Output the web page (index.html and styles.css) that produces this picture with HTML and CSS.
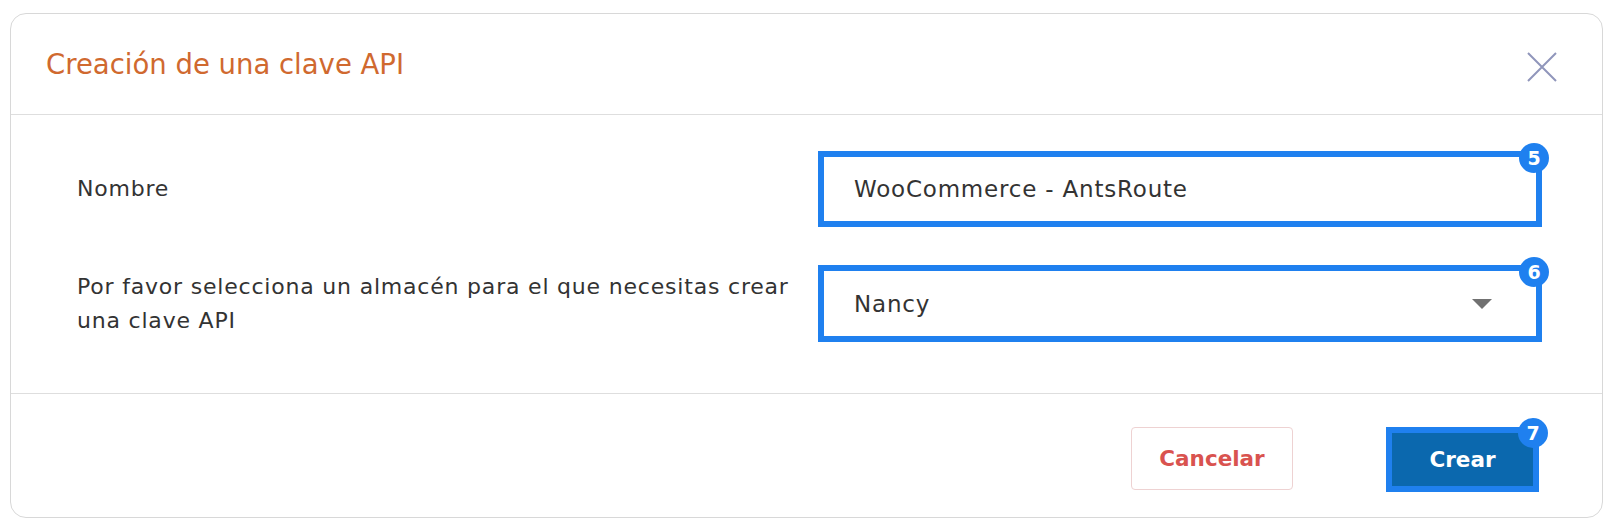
FILE: index.html
```html
<!DOCTYPE html>
<html lang="es">
<head>
    <meta charset="UTF-8">
    <meta name="viewport" content="width=device-width, initial-scale=1.0">
    <title>Creación de una clave API</title>
    <link rel="stylesheet" href="styles.css">
</head>
<body>
    <!-- API key modal -->
    <div class="modal">
        <div class="modal-header">
            <h2 class="modal-title">Creación de una clave API</h2>
            <button class="close-btn" aria-label="Cerrar">
                <svg width="30" height="30" viewBox="0 0 30 30">
                    <path d="M1 1 L29 29 M29 1 L1 29" stroke="#9096bb" stroke-width="2" fill="none"/>
                </svg>
            </button>
        </div>

        <div class="modal-body">
            <div class="form-row">
                <label class="form-label" for="api-name">Nombre</label>
                <div class="field highlight">
                    <input type="text" id="api-name" value="WooCommerce - AntsRoute">
                    <span class="step-badge">5</span>
                </div>
            </div>

            <div class="form-row">
                <label class="form-label">Por favor selecciona un almacén para el que necesitas crear<br>una clave API</label>
                <div class="field highlight select">
                    <span class="field-value">Nancy</span>
                    <svg class="select-arrow" width="20" height="10" viewBox="0 0 20 10">
                        <path d="M0 0 L20 0 L10 10 Z" fill="#717171"/>
                    </svg>
                    <span class="step-badge">6</span>
                </div>
            </div>
        </div>

        <div class="modal-footer">
            <button class="btn btn-cancel">Cancelar</button>
            <button class="btn btn-create">Crear<span class="step-badge">7</span></button>
        </div>
    </div>
</body>
</html>
```

FILE: styles.css
```css
body {
    margin: 0;
    padding: 0;
    background: #fff;
    font-family: 'DejaVu Sans', sans-serif;
    color: #333;
}

.modal {
    margin: 13px 11px 0 10px;
    height: 505px;
    box-sizing: border-box;
    border: 1px solid #d8d8d8;
    border-radius: 16px;
    display: flex;
    flex-direction: column;
}

.modal-header {
    height: 101px;
    box-sizing: border-box;
    border-bottom: 1px solid #dedede;
    display: flex;
    align-items: center;
    justify-content: space-between;
    padding: 0 45px 0 35px;
}

.modal-title {
    margin: 0;
    font-size: 27.5px;
    font-weight: normal;
    color: #d0692f;
}

.close-btn {
    background: none;
    border: none;
    padding: 0;
    margin-top: 6px;
    width: 30px;
    height: 30px;
    cursor: pointer;
}

.close-btn svg {
    display: block;
}

.modal-body {
    padding: 36px 60px 51px 66px;
    border-bottom: 1px solid #dedede;
    display: flex;
    flex-direction: column;
    gap: 38px;
}

.form-row {
    display: grid;
    grid-template-columns: 1fr 724px;
    align-items: center;
}

.form-label {
    font-size: 22px;
    letter-spacing: 0.8px;
    line-height: 34px;
    color: #333;
}

.field {
    position: relative;
    height: 76px;
    box-sizing: border-box;
    display: flex;
    align-items: center;
    padding: 0 30px;
    background: #fff;
}

.field.select {
    height: 77px;
}

.highlight {
    border: 6px solid #1f80ef;
}

.field input {
    border: none;
    outline: none;
    padding: 0;
    width: 100%;
    font-family: inherit;
    font-size: 23px;
    letter-spacing: 0.8px;
    color: #333;
    background: transparent;
}

.field-value {
    flex: 1;
    font-size: 23px;
    letter-spacing: 0.8px;
    color: #333;
}

.select-arrow {
    margin-right: 14px;
}

.step-badge {
    position: absolute;
    top: -14px;
    right: -13px;
    width: 30px;
    height: 30px;
    border-radius: 50%;
    background: #1f80ef;
    color: #fff;
    font-size: 19px;
    font-weight: bold;
    letter-spacing: 0;
    display: flex;
    align-items: center;
    justify-content: center;
}

.modal-footer {
    flex: 1;
    display: flex;
    justify-content: flex-end;
    align-items: flex-start;
    gap: 93px;
    padding: 33px 63px 0 0;
}

.btn {
    font-family: inherit;
    font-size: 21.5px;
    font-weight: bold;
    cursor: pointer;
    box-sizing: border-box;
}

.btn-cancel {
    width: 162px;
    height: 63px;
    background: #fff;
    color: #d9534f;
    border: 1px solid #eed2d2;
    border-radius: 4px;
}

.btn-create {
    position: relative;
    width: 153px;
    height: 65px;
    background: #0b68ae;
    color: #fff;
    border: 6px solid #1f80ef;
}

.btn-create .step-badge {
    top: -15px;
    right: -15px;
}
```
